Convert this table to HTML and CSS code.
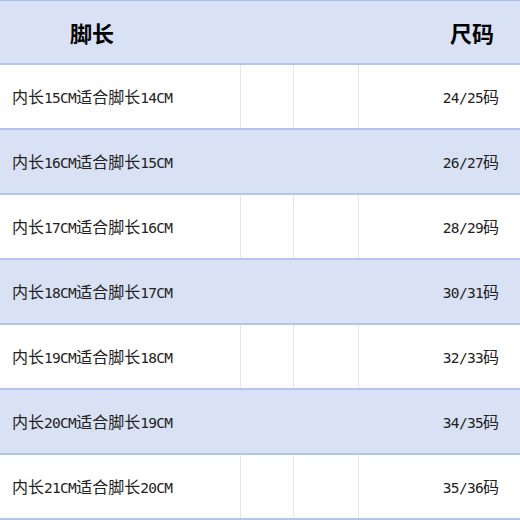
FILE: index.html
```html
<!DOCTYPE html>
<html lang="zh">
<head>
<meta charset="utf-8">
<link rel="stylesheet" href="styles.css">
</head>
<body>
<div class="table">
  <div class="row head">
    <div class="cell c1"><span class="h-left">脚长</span></div>
    <div class="cell c2"></div>
    <div class="cell c3"></div>
    <div class="cell c4"><span class="h-right">尺码</span></div>
  </div>
  <div class="row white">
    <div class="cell c1"><span class="txt">内长<span class="lat">15CM</span>适合脚长<span class="lat">14CM</span></span></div><div class="cell c2"></div><div class="cell c3"></div><div class="cell c4"><span class="txt"><span class="lat">24/25</span>码</span></div>
  </div>
  <div class="row blue">
    <div class="cell c1"><span class="txt">内长<span class="lat">16CM</span>适合脚长<span class="lat">15CM</span></span></div><div class="cell c2"></div><div class="cell c3"></div><div class="cell c4"><span class="txt"><span class="lat">26/27</span>码</span></div>
  </div>
  <div class="row white">
    <div class="cell c1"><span class="txt">内长<span class="lat">17CM</span>适合脚长<span class="lat">16CM</span></span></div><div class="cell c2"></div><div class="cell c3"></div><div class="cell c4"><span class="txt"><span class="lat">28/29</span>码</span></div>
  </div>
  <div class="row blue">
    <div class="cell c1"><span class="txt">内长<span class="lat">18CM</span>适合脚长<span class="lat">17CM</span></span></div><div class="cell c2"></div><div class="cell c3"></div><div class="cell c4"><span class="txt"><span class="lat">30/31</span>码</span></div>
  </div>
  <div class="row white">
    <div class="cell c1"><span class="txt">内长<span class="lat">19CM</span>适合脚长<span class="lat">18CM</span></span></div><div class="cell c2"></div><div class="cell c3"></div><div class="cell c4"><span class="txt"><span class="lat">32/33</span>码</span></div>
  </div>
  <div class="row blue">
    <div class="cell c1"><span class="txt">内长<span class="lat">20CM</span>适合脚长<span class="lat">19CM</span></span></div><div class="cell c2"></div><div class="cell c3"></div><div class="cell c4"><span class="txt"><span class="lat">34/35</span>码</span></div>
  </div>
  <div class="row white">
    <div class="cell c1"><span class="txt">内长<span class="lat">21CM</span>适合脚长<span class="lat">20CM</span></span></div><div class="cell c2"></div><div class="cell c3"></div><div class="cell c4"><span class="txt"><span class="lat">35/36</span>码</span></div>
  </div>
</div>
</body>
</html>
```
FILE: styles.css
```css
html, body {
  margin: 0;
  padding: 0;
  background: #ffffff;
}
.table {
  width: 520px;
  font-family: "Noto Sans CJK SC", sans-serif;
  font-size: 16px;
  color: #222222;
}
.row {
  display: grid;
  grid-template-columns: 240px 53px 65px 162px;
  height: 63px;
  border-bottom: 2px solid #b3c5eb;
}
.head {
  height: 62px;
  border-top: 1px solid #a9bde8;
  background: #d9e1f4;
  font-weight: bold;
  font-size: 22px;
  color: #000000;
}
.blue {
  background: #d9e1f4;
}
.cell {
  display: flex;
  align-items: center;
  white-space: nowrap;
}
.txt {
  line-height: 20px;
}
.lat {
  font-family: "DejaVu Sans Mono", monospace;
  font-size: 14.5px;
  letter-spacing: -0.7px;
}
.white .c2, .white .c3, .white .c4 {
  border-left: 1px solid #e6e6e6;
}
.c1 {
  padding-left: 12px;
}
.c4 {
  justify-content: flex-end;
  padding-right: 21px;
}
.h-left {
  padding-left: 58px;
}
.head .c4 {
  padding-right: 26px;
}
```
